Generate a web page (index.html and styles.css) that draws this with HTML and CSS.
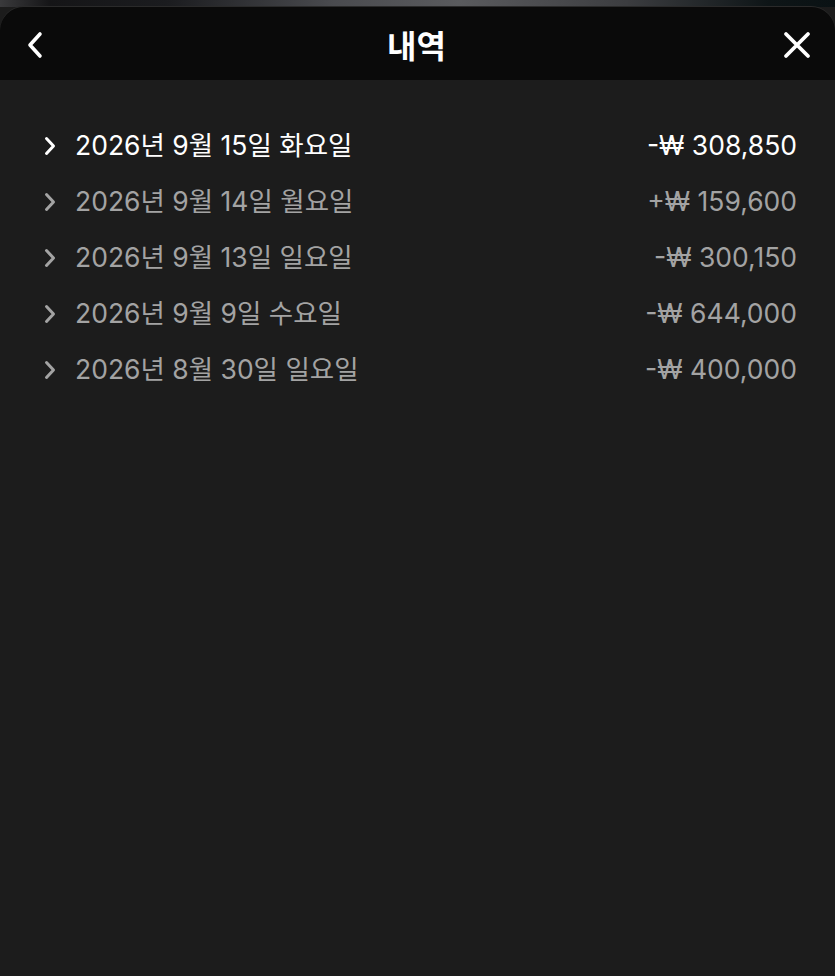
FILE: index.html
```html
<!DOCTYPE html>
<html lang="ko">
<head>
<meta charset="utf-8">
<link rel="stylesheet" href="styles.css">
</head>
<body>
<div class="backdrop"></div>
<div class="sheet">
  <header class="head">
    <button class="icon-btn back" aria-label="뒤로">
      <svg width="22" height="28" viewBox="0 0 22 28"><path d="M15 3 L5 14 L15 25" fill="none" stroke="#fff" stroke-width="3.6" stroke-linecap="round" stroke-linejoin="round"/></svg>
    </button>
    <h1 class="title">내역</h1>
    <button class="icon-btn close" aria-label="닫기">
      <svg width="30" height="30" viewBox="0 0 30 30"><path d="M4 4 L26 26 M26 4 L4 26" fill="none" stroke="#fff" stroke-width="3.8" stroke-linecap="round"/></svg>
    </button>
  </header>
  <ul class="list">
    <li class="row active">
      <span class="chev"><svg width="15" height="22" viewBox="0 0 15 22"><path d="M3.5 3.5 L10.5 11 L3.5 18.5" fill="none" stroke="currentColor" stroke-width="3" stroke-linecap="round" stroke-linejoin="round"/></svg></span>
      <span class="date">2026년 9월 15일 화요일</span>
      <span class="amt">-₩ 308,850</span>
    </li>
    <li class="row">
      <span class="chev"><svg width="15" height="22" viewBox="0 0 15 22"><path d="M3.5 3.5 L10.5 11 L3.5 18.5" fill="none" stroke="currentColor" stroke-width="3" stroke-linecap="round" stroke-linejoin="round"/></svg></span>
      <span class="date">2026년 9월 14일 월요일</span>
      <span class="amt">+₩ 159,600</span>
    </li>
    <li class="row">
      <span class="chev"><svg width="15" height="22" viewBox="0 0 15 22"><path d="M3.5 3.5 L10.5 11 L3.5 18.5" fill="none" stroke="currentColor" stroke-width="3" stroke-linecap="round" stroke-linejoin="round"/></svg></span>
      <span class="date">2026년 9월 13일 일요일</span>
      <span class="amt">-₩ 300,150</span>
    </li>
    <li class="row">
      <span class="chev"><svg width="15" height="22" viewBox="0 0 15 22"><path d="M3.5 3.5 L10.5 11 L3.5 18.5" fill="none" stroke="currentColor" stroke-width="3" stroke-linecap="round" stroke-linejoin="round"/></svg></span>
      <span class="date">2026년 9월 9일 수요일</span>
      <span class="amt">-₩ 644,000</span>
    </li>
    <li class="row">
      <span class="chev"><svg width="15" height="22" viewBox="0 0 15 22"><path d="M3.5 3.5 L10.5 11 L3.5 18.5" fill="none" stroke="currentColor" stroke-width="3" stroke-linecap="round" stroke-linejoin="round"/></svg></span>
      <span class="date">2026년 8월 30일 일요일</span>
      <span class="amt">-₩ 400,000</span>
    </li>
  </ul>
</div>
</body>
</html>
```

FILE: styles.css
```css
* { box-sizing: border-box; }
html, body { margin: 0; padding: 0; }
body {
  width: 835px;
  height: 976px;
  overflow: hidden;
  background: #1c1c1c;
  font-family: Inter, "Noto Sans CJK KR", sans-serif;
}
.backdrop {
  height: 7px;
  background: linear-gradient(90deg, #3a3a3c 0%, #151517 6%, #1b1c1f 20%, #4a4b4f 40%, #5a5b5e 55%, #3c3d40 75%, #0e1517 92%, #0a1214 100%);
}
.sheet {
  background: #1c1c1c;
  border-radius: 24px 24px 0 0;
  overflow: hidden;
  height: 969px;
  box-shadow: 0 -1px 0 #2a2a2a;
}
.head {
  height: 73px;
  background: #0a0a0a;
  display: flex;
  align-items: center;
  justify-content: space-between;
  padding: 0 22px 0 20px;
}
.icon-btn {
  background: none;
  border: 0;
  padding: 0;
  display: flex;
  align-items: center;
  justify-content: center;
  width: 32px;
  height: 32px;
}
.back { margin-top: 2px; }
.close { margin-top: 2px; }
.title {
  margin: 0;
  color: #fff;
  font-family: "Noto Sans CJK KR", sans-serif;
  font-weight: 700;
  font-size: 32px;
  line-height: 1;
}
.list {
  list-style: none;
  margin: 0;
  padding: 37px 38px 0 42px;
}
.row {
  display: flex;
  align-items: baseline;
  height: 56px;
  padding-top: 10px;
  color: #a3a3a3;
  font-size: 26.5px;
  line-height: 36px;
}
.row.active { color: #fff; }
.chev {
  display: flex;
  width: 33px;
  align-self: center;
  align-items: center;
  padding-left: 1px;
  margin-bottom: 8px;
}
.date { flex: 1; }
```
